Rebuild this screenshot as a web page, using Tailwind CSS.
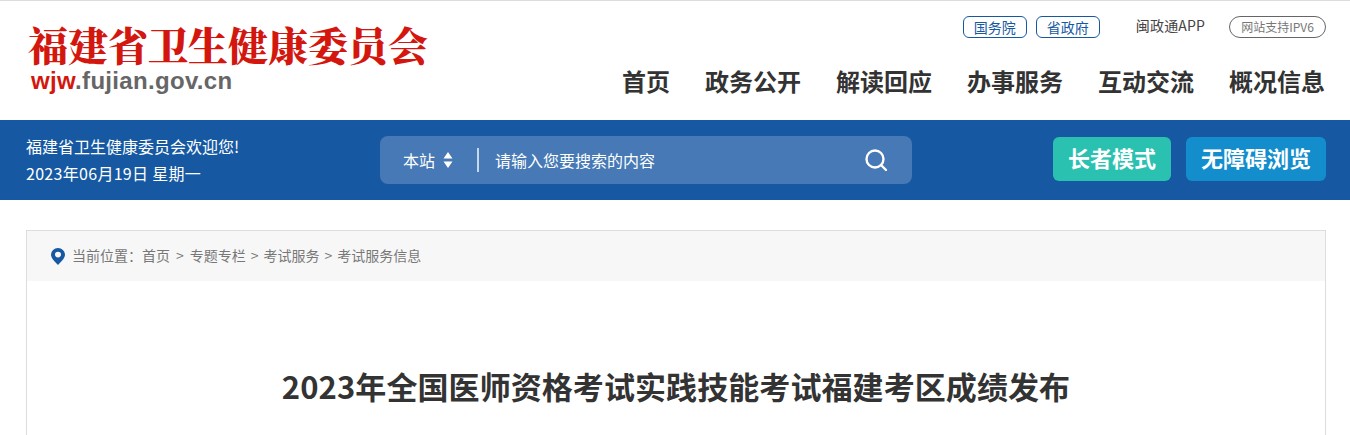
<!DOCTYPE html>
<html lang="zh-CN">
<head>
    <meta charset="UTF-8">
    <title>2023年全国医师资格考试实践技能考试福建考区成绩发布</title>
    <script src="https://cdn.jsdelivr.net/npm/@tailwindcss/browser@4"></script>
</head>
<body class="h-[435px] overflow-hidden bg-white font-['Noto_Sans_CJK_SC','Noto_Sans',sans-serif] text-[#333]">
    <!-- header -->
    <header class="h-[120px] border-t border-[#ddd] flex justify-between pl-[28px] pr-[24px]">
        <div class="pt-[21px]">
            <div class="font-['Noto_Serif_CJK_SC','Noto_Sans_CJK_SC',serif] font-black text-[40px] leading-[44px] text-[#d3170f]">福建省卫生健康委员会</div>
            <div class="mt-[1px] ml-[3px] font-['Liberation_Sans',sans-serif] font-bold text-[24px] leading-[28px] tracking-[0.32px] text-[#666]"><span class="text-[#d3170f]">wjw</span>.fujian.gov.cn</div>
        </div>
        <div class="flex flex-col items-end">
            <div class="flex items-center h-[22px] mt-[15px] text-[14px]">
                <a class="w-[64px] h-[22px] flex items-center justify-center rounded-[6px] border border-[#1659a2] text-[#1659a2]">国务院</a>
                <a class="ml-[9px] w-[64px] h-[22px] flex items-center justify-center rounded-[6px] border border-[#1659a2] text-[#1659a2]">省政府</a>
                <a class="ml-[36px] -mt-[4px] tracking-[0.15px] text-[#444]">闽政通APP</a>
                <a class="ml-[24px] w-[97px] h-[22px] flex items-center justify-center rounded-full border border-[#666] text-[12px] text-[#777]">网站支持IPV6</a>
            </div>
            <nav class="flex gap-[35px] mt-[25px] mr-[1px] text-[24px] leading-[36px] font-bold text-[#333]">
                <a>首页</a>
                <a>政务公开</a>
                <a>解读回应</a>
                <a>办事服务</a>
                <a>互动交流</a>
                <a>概况信息</a>
            </nav>
        </div>
    </header>

    <!-- blue bar -->
    <div class="h-[80px] bg-[#1659a2] flex items-center justify-between pl-[26px] pr-[24px] text-white">
        <div class="w-[354px] text-[16px] leading-[27px] -mt-[1px]">
            <p>福建省卫生健康委员会欢迎您!</p>
            <p class="tracking-[0.3px]">2023年06月19日 星期一</p>
        </div>
        <div class="w-[532px] h-[48px] rounded-[8px] bg-[#4679b5] flex items-center pl-[23px] pr-[24px] text-[16px]">
            <span>本站</span>
            <svg class="ml-[8px]" width="10" height="18" viewBox="0 0 10 18" fill="#fff"><path d="M5 1l4.500 6.500h-9zM5 17l4.500-6.500h-9z"/></svg>
            <span class="ml-[24px] h-[24px] w-[2px] bg-white/70"></span>
            <span class="ml-[16px] flex-1">请输入您要搜索的内容</span>
            <svg width="24" height="24" viewBox="0 0 24 24" fill="none" stroke="#fff" stroke-width="2.400"><circle cx="11" cy="11" r="8.500"/><path d="M17 17l5 5" stroke-linecap="round"/></svg>
        </div>
        <div class="w-[414px] flex justify-end gap-[15px] text-[22px] font-bold mb-[2px]">
            <a class="w-[118px] h-[44px] pb-[3px] rounded-[6px] bg-[#2bc1b1] flex items-center justify-center">长者模式</a>
            <a class="w-[140px] h-[44px] pb-[3px] rounded-[6px] bg-[#138dcb] flex items-center justify-center">无障碍浏览</a>
        </div>
    </div>

    <!-- article -->
    <main class="mt-[30px] mx-[26px] w-[1300px] h-[205px] border-x border-t border-[#ddd]">
        <div class="h-[50px] bg-[#f7f7f7] flex items-center pl-[24px] pb-[2px] text-[14px] text-[#777]">
            <svg class="mt-[2px]" width="14" height="17" viewBox="0 0 14 18" preserveAspectRatio="none"><path fill-rule="evenodd" fill="#1659a2" d="M7 0a7 7 0 0 1 7 7c0 4-4 8-7 11C4 15 0 11 0 7a7 7 0 0 1 7-7zm0 4a3 3 0 1 0 0 6 3 3 0 0 0 0-6z"/></svg>
            <span class="ml-[7px]">当前位置：</span>
            <span>首页</span>
            <span class="mx-[6px]">&gt;</span>
            <span>专题专栏</span>
            <span class="mx-[5px]">&gt;</span>
            <span>考试服务</span>
            <span class="mx-[5px]">&gt;</span>
            <span>考试服务信息</span>
        </div>
        <h1 class="mt-[82px] text-center text-[31px] leading-[46px] tracking-[0.08px] font-bold text-[#333]">2023年全国医师资格考试实践技能考试福建考区成绩发布</h1>
    </main>
</body>
</html>
